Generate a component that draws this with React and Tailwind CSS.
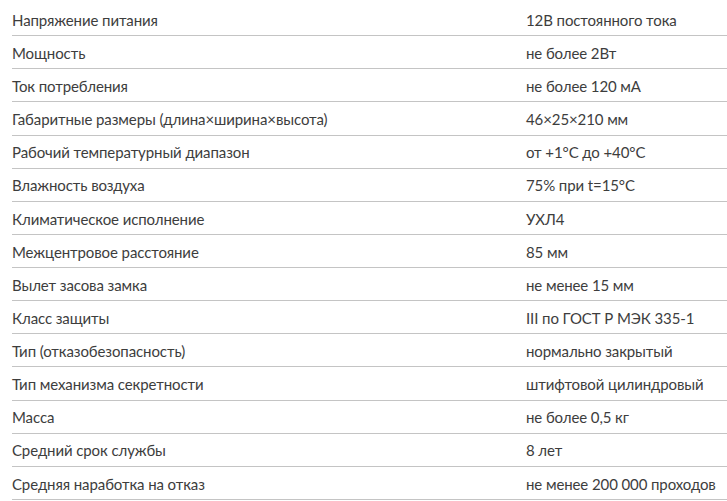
const rows = [
  ["Напряжение питания", "12В постоянного тока"],
  ["Мощность", "не более 2Вт"],
  ["Ток потребления", "не более 120 мА"],
  ["Габаритные размеры (длина×ширина×высота)", "46×25×210 мм"],
  ["Рабочий температурный диапазон", "от +1°С до +40°С"],
  ["Влажность воздуха", "75% при t=15°С"],
  ["Климатическое исполнение", "УХЛ4"],
  ["Межцентровое расстояние", "85 мм"],
  ["Вылет засова замка", "не менее 15 мм"],
  ["Класс защиты", "III по ГОСТ Р МЭК 335-1"],
  ["Тип (отказобезопасность)", "нормально закрытый"],
  ["Тип механизма секретности", "штифтовой цилиндровый"],
  ["Масса", "не более 0,5 кг"],
  ["Средний срок службы", "8 лет"],
  ["Средняя наработка на отказ", "не менее 200 000 проходов"],
];

export default function App() {
  return (
    <div className="w-[727px] h-[501px] overflow-hidden bg-white pt-[3px] pl-[12px] font-['Lato',sans-serif] text-[15px] tracking-[-0.1px] text-[#3d3d3d]">
      {rows.map(([name, value], i) => (
        <div key={i} className="flex items-center pt-[2px] h-[33.14px] border-b border-[#c4c4c4]">
          <div className="w-[514px]">{name}</div>
          <div>{value}</div>
        </div>
      ))}
    </div>
  );
}
